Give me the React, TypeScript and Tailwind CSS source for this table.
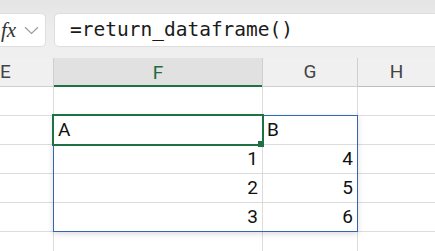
import React from "react";

const cellFont = { fontFamily: "Roboto, 'Liberation Sans', sans-serif" };

// column E runs past the left edge of the window, so the grid starts at -42px
const COLS = "ml-[-42px] grid grid-cols-[96px_209px_95px_1fr]";

function HeaderCell({
  label,
  selected,
  last,
}: {
  label: string;
  selected?: boolean;
  last?: boolean;
}) {
  return (
    <div
      className={
        "relative flex h-[29px] items-center justify-center text-[19px] " +
        (last ? "" : "border-r border-[#cfcfcf] ") +
        (selected
          ? "bg-[#e1e1e1] text-[#1e6b41]"
          : "border-b border-[#bdbdbd] bg-[#f0f0f0] text-[#444444]")
      }
    >
      <span className="pt-[1px]">{label}</span>
      {selected && (
        <div className="absolute bottom-0 left-0 right-0 h-[2px] bg-[#1e7145]" />
      )}
    </div>
  );
}

function Cell({
  text,
  align = "left",
  last,
}: {
  text?: string;
  align?: "left" | "right";
  last?: boolean;
}) {
  return (
    <div
      className={
        "flex h-[29px] items-end border-b border-[#dcdcdc] pb-[3px] text-[19px] leading-[22px] text-[#111111] " +
        (last ? "" : "border-r ") +
        (align === "right" ? "justify-end pr-[4px]" : "justify-start pl-[4px]")
      }
    >
      {text}
    </div>
  );
}

const rows: [string, string][] = [
  ["", ""],
  ["A", "B"],
  ["1", "4"],
  ["2", "5"],
  ["3", "6"],
  ["", ""],
];

export default function App() {
  return (
    <div className="h-[251px] w-[435px] overflow-hidden bg-white">
      {/* formula bar */}
      <div className="flex h-[58px] items-start gap-[8px] bg-gradient-to-b from-[#e4e4e4] via-[#ededed] to-[#efefef] pt-[13px]">
        <div className="ml-[-12px] flex h-[34px] w-[58px] items-center gap-[8px] rounded-[5px] border border-[#dedede] bg-white pl-[12px]">
          <span
            className="text-[21px] italic leading-none text-[#333333]"
            style={{ fontFamily: "'Liberation Serif', 'DejaVu Serif', serif" }}
          >
            fx
          </span>
          <svg width="15" height="9" viewBox="0 0 15 9" className="mt-[1px]">
            <path
              d="M1 1.2 L7.5 7.5 L14 1.2"
              fill="none"
              stroke="#9c9c9c"
              strokeWidth="1.2"
            />
          </svg>
        </div>
        <div className="mr-[-12px] flex h-[34px] flex-1 items-center rounded-[5px] border border-[#dedede] bg-white pl-[15px]">
          <span
            className="text-[19.5px] leading-none text-[#1a1a1a]"
            style={{ fontFamily: "'DejaVu Sans Mono', 'Liberation Mono', monospace" }}
          >
            =return_dataframe()
          </span>
        </div>
      </div>

      {/* column headers */}
      <div className={COLS} style={cellFont}>
        <HeaderCell label="E" />
        <HeaderCell label="F" selected />
        <HeaderCell label="G" />
        <HeaderCell label="H" last />
      </div>

      {/* sheet body */}
      <div className="relative" style={cellFont}>
        <div className={COLS}>
          {rows.map(([f, g], i) => {
            const numeric = i >= 2;
            return (
              <React.Fragment key={i}>
                <Cell />
                <Cell text={f} align={numeric ? "right" : "left"} />
                <Cell text={g} align={numeric ? "right" : "left"} />
                <Cell last />
              </React.Fragment>
            );
          })}
        </div>

        {/* spill range outline */}
        <div className="pointer-events-none absolute left-[53px] top-[28px] h-[117px] w-[305px] border border-[#3563b8] shadow-[0_2px_6px_rgba(0,0,0,0.14)]" />

        {/* active cell */}
        <div className="pointer-events-none absolute left-[52px] top-[27px] h-[32px] w-[212px] border-2 border-[#1e7145]" />
        <div className="pointer-events-none absolute left-[258px] top-[54px] h-[6px] w-[6px] bg-[#1e7145]" />
      </div>
    </div>
  );
}
